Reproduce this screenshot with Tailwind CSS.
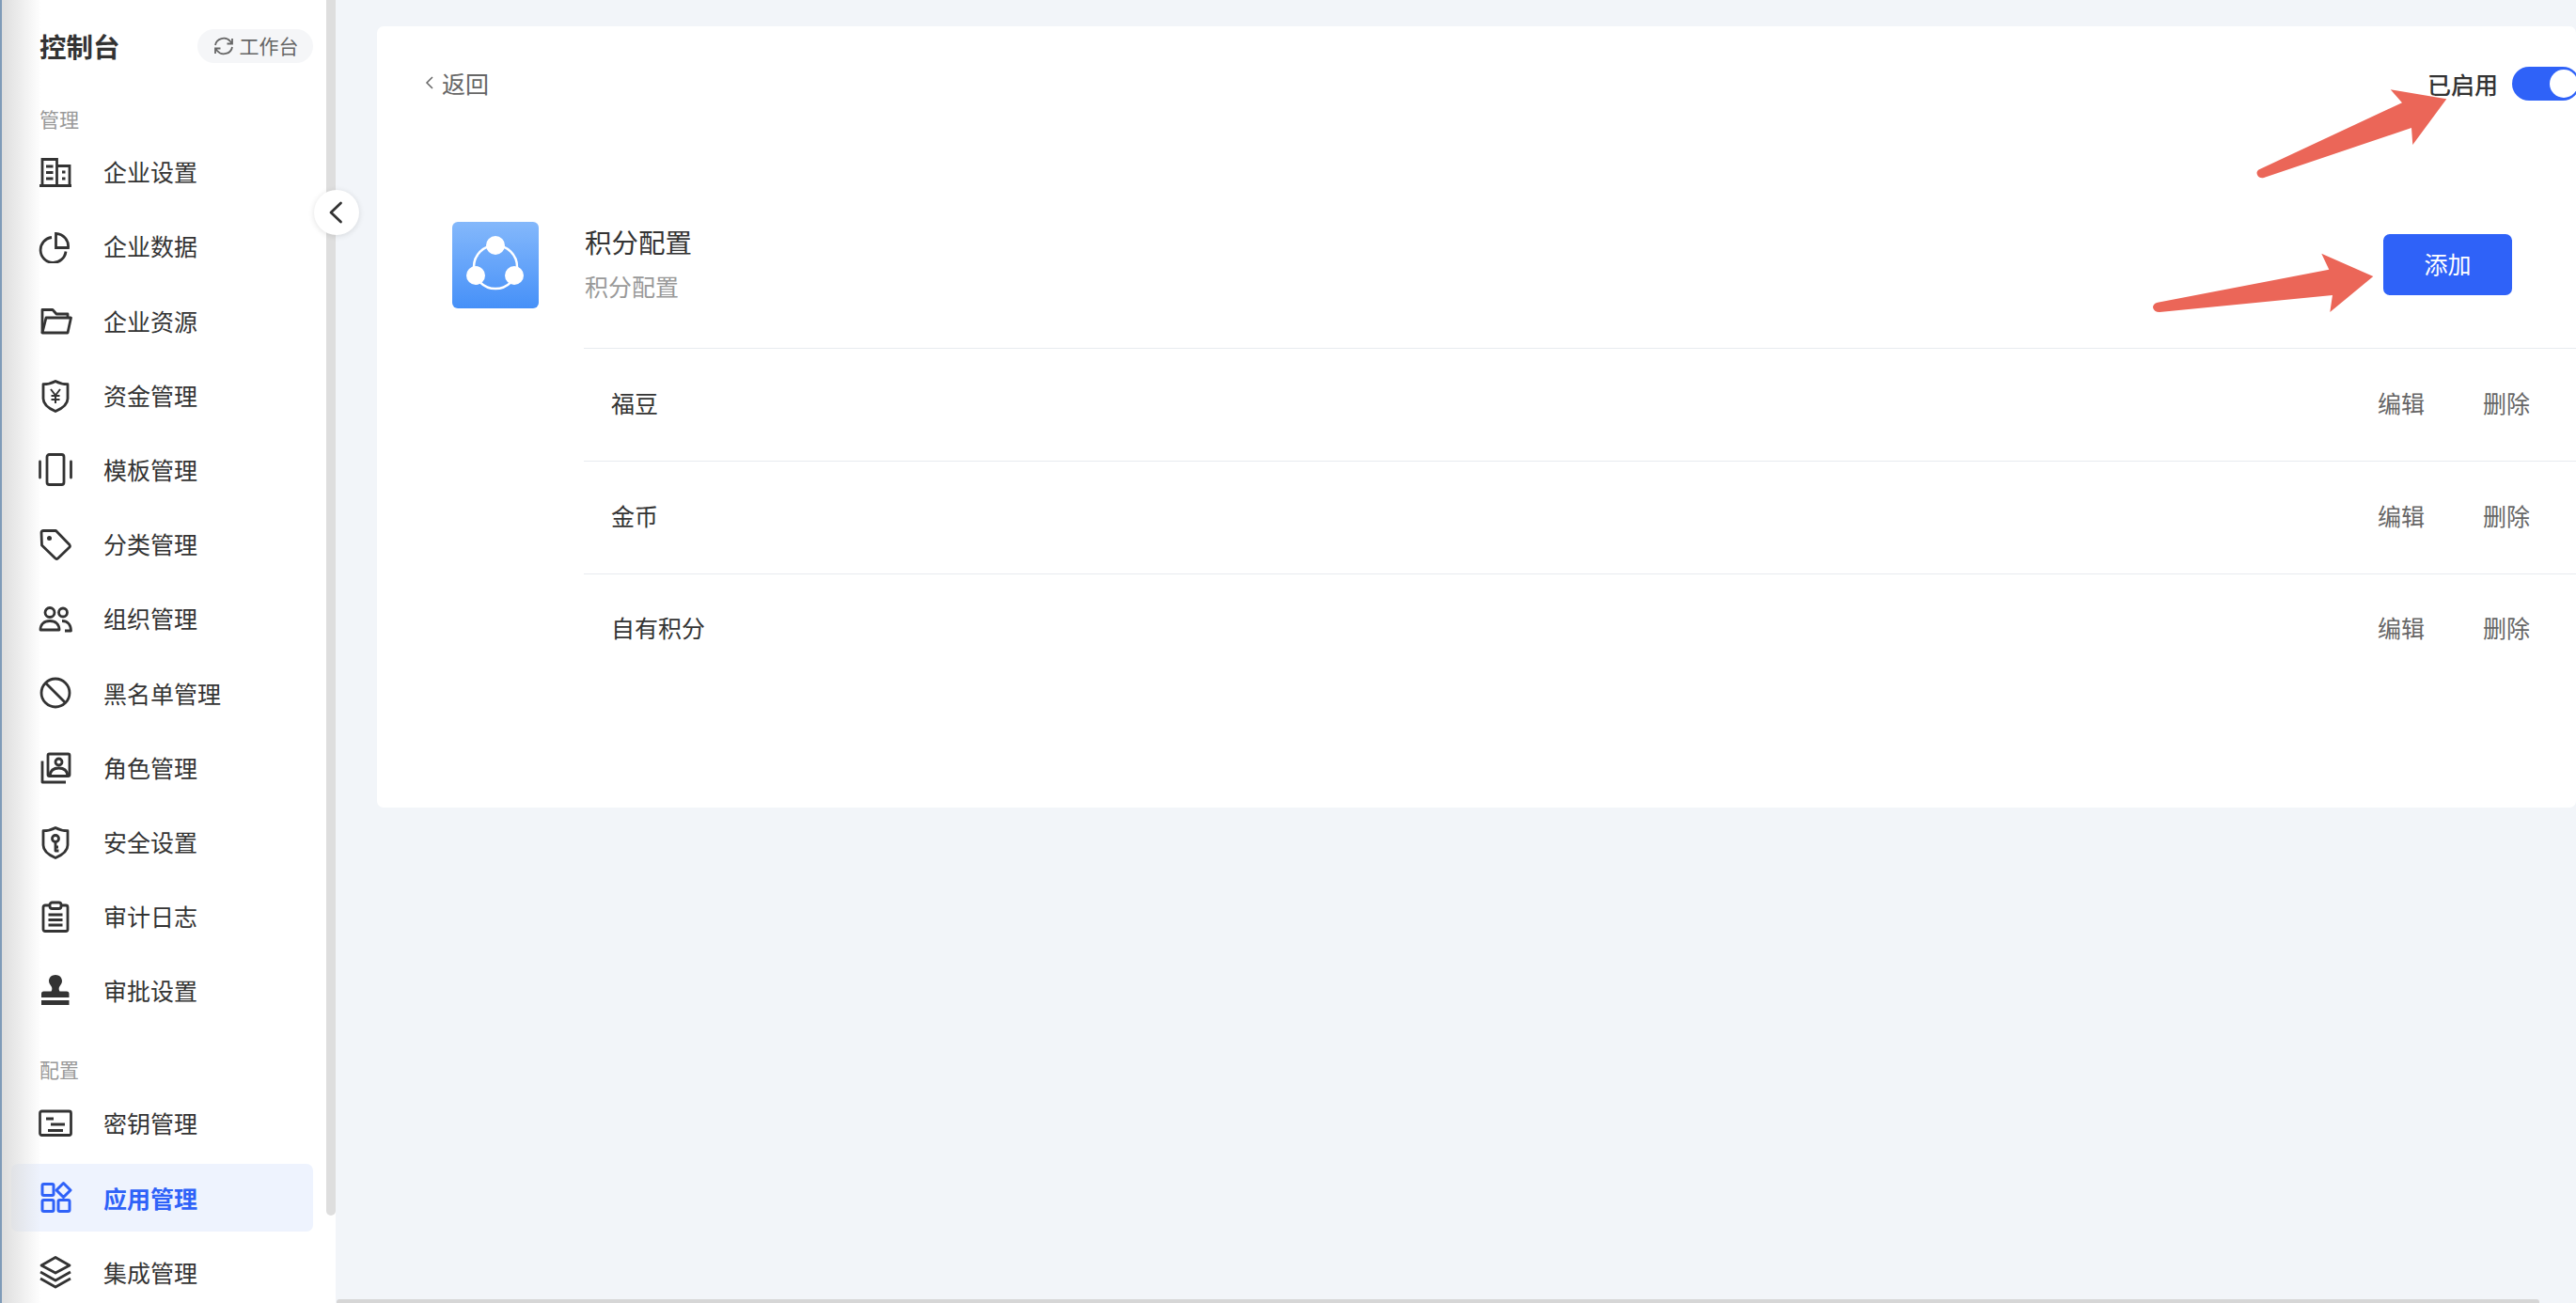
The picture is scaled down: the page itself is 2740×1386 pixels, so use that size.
<!DOCTYPE html>
<html lang="zh-CN">
<head>
<meta charset="utf-8">
<title>积分配置</title>
<script src="https://cdn.jsdelivr.net/npm/@tailwindcss/browser@4"></script>
</head>
<body class="relative flex h-[1386px] w-[2740px] overflow-hidden bg-[#f2f5f9] font-['Noto_Sans_CJK_SC','Noto_Sans',sans-serif] text-[25px] text-[#333]">

<aside class="relative flex h-full w-[357px] shrink-0 flex-col overflow-hidden bg-white">
  <div class="flex h-[98px] shrink-0 items-center justify-between pl-[42px] pr-[24px]">
    <span class="text-[28.500px] font-bold leading-none">控制台</span>
    <span class="flex h-[36px] w-[123px] items-center justify-center gap-[5px] rounded-full bg-[#f5f6f8] text-[21px] text-[#666]">
      <svg class="h-[24px] w-[24px]" viewBox="0 0 24 24" fill="none" stroke="#666" stroke-width="1.800"><path d="M3 11a9 8.500 0 0 1 16-4l2 2.500M21 4v5.500h-5.500"/><path d="M21 13a9 8.500 0 0 1-16 4l-2-2.500M3 20v-5.500h5.500"/></svg>
      工作台
    </span>
  </div>
  <div class="shrink-0 pl-[42px] pt-[13px] text-[21px] leading-[30px] text-[#999]">管理</div>
  <nav class="mt-[6px] flex shrink-0 flex-col gap-[7.200px]">
    <a class="ml-[12px] mr-[24px] flex h-[72px] items-center gap-[33px] pl-[29px]">
      <svg class="h-[36px] w-[36px] shrink-0" viewBox="0 0 36 36" fill="none" stroke="#333" stroke-width="2.800"><path d="M1 32.500h34M4 32V4.500h15.500V32M19.500 11.500H33V32M8 12h7.500M8 18.500h7.500M8 25h7.500M25 18h3.500M25 25h3.500"/></svg>
      <span>企业设置</span>
    </a>
    <a class="ml-[12px] mr-[24px] flex h-[72px] items-center gap-[33px] pl-[29px]">
      <svg class="h-[36px] w-[36px] shrink-0" viewBox="0 0 36 36" fill="none" stroke="#333" stroke-width="2.800"><path d="M14 8.500a13.500 13.500 0 1 0 15 15"/><path d="M18.500 4.500a13.500 13.500 0 0 1 13 15h-13z"/></svg>
      <span>企业数据</span>
    </a>
    <a class="ml-[12px] mr-[24px] flex h-[72px] items-center gap-[33px] pl-[29px]">
      <svg class="h-[36px] w-[36px] shrink-0" viewBox="0 0 36 36" fill="none" stroke="#333" stroke-width="2.800" stroke-linejoin="round"><path d="M4 31V6.500h11l4 4.500h12v4"/><path d="M4 31h27l3.500-16H8z"/></svg>
      <span>企业资源</span>
    </a>
    <a class="ml-[12px] mr-[24px] flex h-[72px] items-center gap-[33px] pl-[29px]">
      <svg class="h-[36px] w-[36px] shrink-0" viewBox="0 0 36 36" fill="none" stroke="#333" stroke-width="2.800" stroke-linejoin="round"><path d="M18 2.500c4 2.200 9 3.200 13 3.200V21c0 6-6 10.500-13 13.500C11 31.500 5 27 5 21V5.700c4 0 9-1 13-3.200z"/><path stroke-width="2" d="M13 11l5 6.500 5-6.500M18 17.500V26M13.500 18h9M13.500 22h9"/></svg>
      <span>资金管理</span>
    </a>
    <a class="ml-[12px] mr-[24px] flex h-[72px] items-center gap-[33px] pl-[29px]">
      <svg class="h-[36px] w-[36px] shrink-0" viewBox="0 0 36 36" fill="none" stroke="#333" stroke-width="2.800" stroke-linecap="round"><rect x="9" y="1.500" width="18" height="32" rx="2.500"/><path d="M1.500 9v17M34.500 9v17"/></svg>
      <span>模板管理</span>
    </a>
    <a class="ml-[12px] mr-[24px] flex h-[72px] items-center gap-[33px] pl-[29px]">
      <svg class="h-[36px] w-[36px] shrink-0" viewBox="0 0 36 36" fill="none" stroke="#333" stroke-width="2.800" stroke-linejoin="round"><path d="M3 5.500a2 2 0 0 1 2-2h13.500L33 18.500a2 2 0 0 1 0 2.500L20.500 33a2 2 0 0 1-2.500 0L3.500 19z"/><circle cx="11.500" cy="11.500" r="2.500" fill="#333" stroke="none"/></svg>
      <span>分类管理</span>
    </a>
    <a class="ml-[12px] mr-[24px] flex h-[72px] items-center gap-[33px] pl-[29px]">
      <svg class="h-[36px] w-[36px] shrink-0" viewBox="0 0 36 36" fill="none" stroke="#333" stroke-width="2.800" stroke-linejoin="round"><circle cx="12" cy="11.500" r="5"/><circle cx="26" cy="11.500" r="4.500"/><path d="M2 30c0-6 4-9.500 10-9.500s10 3.500 10 9.500z"/><path d="M25 20.500c5.500 0 9.500 3.500 9.500 10.500h-6.500"/></svg>
      <span>组织管理</span>
    </a>
    <a class="ml-[12px] mr-[24px] flex h-[72px] items-center gap-[33px] pl-[29px]">
      <svg class="h-[36px] w-[36px] shrink-0" viewBox="0 0 36 36" fill="none" stroke="#333" stroke-width="2.800"><circle cx="18" cy="18" r="15"/><path d="M7.500 7.500l21 21"/></svg>
      <span>黑名单管理</span>
    </a>
    <a class="ml-[12px] mr-[24px] flex h-[72px] items-center gap-[33px] pl-[29px]">
      <svg class="h-[36px] w-[36px] shrink-0" viewBox="0 0 36 36" fill="none" stroke="#333" stroke-width="2.800" stroke-linejoin="round"><path d="M4 10.500V33h25"/><rect x="10" y="3" width="23" height="23.500" rx="1.500"/><circle cx="21.500" cy="11.500" r="3.500"/><path d="M12 26c.5-5 4-8 9.500-8s9 3 9.500 8"/></svg>
      <span>角色管理</span>
    </a>
    <a class="ml-[12px] mr-[24px] flex h-[72px] items-center gap-[33px] pl-[29px]">
      <svg class="h-[36px] w-[36px] shrink-0" viewBox="0 0 36 36" fill="none" stroke="#333" stroke-width="2.800" stroke-linejoin="round"><path d="M18 2.500c4 2.200 9 3.200 13 3.200V21c0 6-6 10.500-13 13.500C11 31.500 5 27 5 21V5.700c4 0 9-1 13-3.200z"/><circle cx="18" cy="14" r="3.500"/><path d="M18 17.500V27h3.500M18 23h3"/></svg>
      <span>安全设置</span>
    </a>
    <a class="ml-[12px] mr-[24px] flex h-[72px] items-center gap-[33px] pl-[29px]">
      <svg class="h-[36px] w-[36px] shrink-0" viewBox="0 0 36 36" fill="none" stroke="#333" stroke-width="2.800" stroke-linejoin="round"><rect x="5" y="6" width="26" height="27.500" rx="2"/><rect x="12" y="3" width="12" height="6.500" rx="2.500" fill="#fff"/><path d="M10.500 16h15M10.500 21.500h15M10.500 27h15"/></svg>
      <span>审计日志</span>
    </a>
    <a class="ml-[12px] mr-[24px] flex h-[72px] items-center gap-[33px] pl-[29px]">
      <svg class="h-[36px] w-[36px] shrink-0" viewBox="0 0 36 36" fill="#333"><path d="M18 1c4 0 7 2.800 7 6.500 0 2.800-2 4.500-3 6.500-.5 1.200-.5 3 .5 4.500H30a2.500 2.500 0 0 1 2.500 2.500v4H3v-4A2.500 2.500 0 0 1 5.500 18.500H13.500c1-1.500 1-3.300.5-4.500-1-2-3-3.700-3-6.500C11 3.800 14 1 18 1z"/><rect x="3" y="28" width="29.500" height="5"/></svg>
      <span>审批设置</span>
    </a>
  </nav>
  <div class="shrink-0 pl-[42px] pt-[32px] text-[21px] leading-[30px] text-[#999]">配置</div>
  <nav class="mt-[7px] flex shrink-0 flex-col gap-[7.200px]">
    <a class="ml-[12px] mr-[24px] flex h-[72px] items-center gap-[33px] pl-[29px]">
      <svg class="h-[36px] w-[36px] shrink-0" viewBox="0 0 36 36" fill="none" stroke="#333" stroke-width="2.800" stroke-linejoin="round"><rect x="1.500" y="5" width="33" height="25.500" rx="2"/><path d="M8 13h8M13 19h15M10 25.500h16"/></svg>
      <span>密钥管理</span>
    </a>
    <a class="ml-[12px] mr-[24px] flex h-[72px] items-center gap-[33px] rounded-[7px] bg-[#eef3fe] pl-[29px] font-semibold text-[#2f62f8]">
      <svg class="h-[36px] w-[36px] shrink-0" viewBox="0 0 36 36" fill="none" stroke="#2f62f8" stroke-width="3" stroke-linejoin="round"><rect x="4" y="3.500" width="12" height="12" rx="1.500"/><rect x="4" y="20.500" width="12" height="12" rx="1.500"/><rect x="21" y="20.500" width="12" height="12" rx="1.500"/><path d="M26.500 2.500l7.500 7.500-7.500 7.500-7.500-7.500z"/></svg>
      <span>应用管理</span>
    </a>
    <a class="ml-[12px] mr-[24px] flex h-[72px] items-center gap-[33px] pl-[29px]">
      <svg class="h-[36px] w-[36px] shrink-0" viewBox="0 0 36 36" fill="none" stroke="#333" stroke-width="2.800" stroke-linejoin="round"><path d="M18 2.500l15 8.500-15 8-15-8z"/><path d="M2 18l16 9 16-9M2 25l16 9 16-9"/></svg>
      <span>集成管理</span>
    </a>
  </nav>
  <div class="pointer-events-none absolute inset-y-0 left-0 w-[44px] bg-gradient-to-r from-[#dcdcdc] to-white/0"></div>
  <div class="absolute inset-y-0 left-0 w-[2px] bg-[#7f9bb8]"></div>
  <div class="absolute right-0 top-0 h-[1293px] w-[10px] rounded-b-[5px] bg-[#dedede]"></div>
</aside>

<button class="absolute left-[334px] top-[202px] z-10 flex h-[48px] w-[48px] items-center justify-center rounded-full bg-white shadow-[0_1px_6px_rgba(0,0,0,0.12)]">
  <svg class="h-[24px] w-[24px]" viewBox="0 0 24 24" fill="none" stroke="#333" stroke-width="2.800" stroke-linecap="round" stroke-linejoin="round"><path d="M16.500 2 6 12l10.500 10"/></svg>
</button>

<main class="flex-1 pl-[44px] pt-[28px]">
  <section class="h-[831px] rounded-[7px] bg-white">
    <header class="flex items-center justify-between pl-[51px] pt-[43px]">
      <div class="flex items-center gap-[9px] text-[#666]">
        <svg class="h-[14px] w-[9px] -translate-y-[1px]" viewBox="0 0 9 14" fill="none" stroke="#666" stroke-width="1.500"><path d="M8 1 2 7l6 6"/></svg>
        <span class="-translate-y-px leading-[36px]">返回</span>
      </div>
      <div class="-mr-[4px] flex items-center gap-[15px]">
        <span class="font-medium leading-[36px]">已启用</span>
        <span class="flex h-[36px] w-[72px] items-center justify-end rounded-full bg-[#2f62f8] pr-[2px]"><span class="h-[30px] w-[30px] rounded-full bg-white"></span></span>
      </div>
    </header>
    <div class="mt-[129px] flex gap-[48px] pl-[80px]">
      <div class="flex h-[92px] w-[92px] shrink-0 items-center justify-center rounded-[6px] bg-gradient-to-b from-[#84b8fb] to-[#4590f8]">
        <svg class="h-[92px] w-[92px]" viewBox="0 0 92 92" fill="none"><circle cx="46" cy="48" r="23" stroke="#fff" stroke-width="2.500"/><circle cx="46" cy="25" r="10" fill="#fff"/><circle cx="25" cy="57" r="10" fill="#fff"/><circle cx="66" cy="57" r="10" fill="#fff"/></svg>
      </div>
      <div class="min-w-0 flex-1">
        <div class="flex h-[135px] items-start justify-between border-b border-[#e8ebef] pr-[68px]">
          <div class="flex flex-col pl-[1px]">
            <span class="pt-[3px] text-[28.500px] leading-[36px]">积分配置</span>
            <span class="pt-[12px] leading-[34px] text-[#999]">积分配置</span>
          </div>
          <button class="mt-[13px] h-[65px] w-[137px] rounded-[7px] bg-[#2f62f8] pb-[2px] text-white">添加</button>
        </div>
        <div class="flex h-[120px] items-center justify-between border-b border-[#e8ebef] pb-[3px] pl-[29px] pr-[49px]">
          <span>福豆</span>
          <div class="flex gap-[62px] text-[#666]"><span>编辑</span><span>删除</span></div>
        </div>
        <div class="flex h-[120px] items-center justify-between border-b border-[#e8ebef] pb-[3px] pl-[29px] pr-[49px]">
          <span>金币</span>
          <div class="flex gap-[62px] text-[#666]"><span>编辑</span><span>删除</span></div>
        </div>
        <div class="flex h-[117px] items-center justify-between pb-[3px] pl-[29px] pr-[49px]">
          <span>自有积分</span>
          <div class="flex gap-[62px] text-[#666]"><span>编辑</span><span>删除</span></div>
        </div>
      </div>
    </div>
  </section>
</main>

<svg class="pointer-events-none absolute left-0 top-0 z-20 h-[1386px] w-[2740px]" viewBox="0 0 2740 1386" fill="#eb6658">
  <path d="M2602.300 105.300 2542.700 95.300 2555 109.300 2402.500 180.500Q2399.500 182.500 2401 186Q2403 190 2408 189L2565 136 2566.300 154z"/>
  <path d="M2524.300 294 2469.300 269.700 2477.300 286.700 2295 321.700Q2290 323 2290 327Q2291 332 2297 332L2481 314 2478.300 332z"/>
</svg>

<div class="absolute bottom-0 left-[358px] h-[4px] w-[2343px] rounded-t-[3px] bg-[#d6d6d6]"></div>
</body>
</html>
